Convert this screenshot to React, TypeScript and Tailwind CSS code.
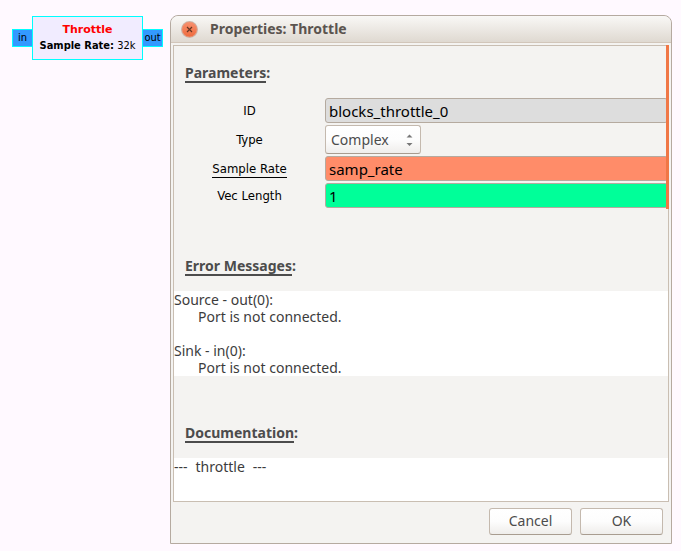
import type { ReactNode } from 'react';

function SectionHeading({ children }: { children: ReactNode }) {
  return (
    <h2 className="flex pl-[11px] text-[14px] leading-[15px] font-bold text-[#4c4c4c]">
      <span className="border-b-2 border-[#4c4c4c] pb-px">{children}</span>:
    </h2>
  );
}

function Port({ children }: { children: ReactNode }) {
  return (
    <div className="flex h-[18px] w-[21px] items-center justify-center border border-[#00ffff] bg-[#3399ff] text-[11px]">
      {children}
    </div>
  );
}

function FlowBlock() {
  return (
    <div className="mt-4 flex shrink-0 items-center self-start font-['DejaVu_Sans_Condensed','DejaVu_Sans',sans-serif] text-black">
      <Port>in</Port>
      <div className="-mx-px flex h-11 w-[111px] flex-col items-center justify-center border border-[#00ffff] bg-[#f1ecff] text-[11px] leading-4 whitespace-nowrap">
        <div className="font-['DejaVu_Sans',sans-serif] font-bold text-[#ff0000]">Throttle</div>
        <div>
          <b>Sample Rate:</b> 32k
        </div>
      </div>
      <Port>out</Port>
    </div>
  );
}

const entry =
  'h-[25px] w-full rounded-[3px] border border-[#b5aa9f] px-[3px] text-[15px] text-black outline-none';
const label = 'text-center text-[13px] leading-4 text-black';
const button =
  "h-[27px] w-[83px] rounded-[3px] border border-[#c4b9ae] border-b-[#a89c90] bg-linear-to-b from-white via-[#fdfdfd] to-[#efedeb] pb-[3px] text-[14px] text-[#4c4c4c]";

function Parameters() {
  return (
    <div className="mt-[15px] grid grid-cols-[151px_1fr] items-center gap-y-[2px] font-['DejaVu_Sans_Condensed','DejaVu_Sans',sans-serif]">
      <label htmlFor="block-id" className={label}>ID</label>
      <input id="block-id" defaultValue="blocks_throttle_0" className={`${entry} bg-[#dddddd] font-['Noto_Sans',sans-serif]`} />
      <label htmlFor="type" className={label}>Type</label>
      <div className="relative w-24">
        <select
          id="type"
          className="block h-[29px] w-full appearance-none rounded-[3px] border border-[#c4b9ae] border-b-[#a89c90] bg-linear-to-b from-white via-[#fdfdfd] to-[#efedeb] pl-[5px] font-['Noto_Sans',sans-serif] text-[14px] text-[#4c4c4c]"
        >
          <option>Complex</option>
        </select>
        <svg className="pointer-events-none absolute top-2 right-2 h-[14px] w-[7px]" viewBox="0 0 7 14" fill="#777">
          <path d="M3.5 1.500 6.500 4.500H.5ZM3.500 13 .5 10H6.500Z" />
        </svg>
      </div>
      <label htmlFor="rate" className={label}>
        <span className="border-b border-black pb-px">Sample Rate</span>
      </label>
      <input id="rate" defaultValue="samp_rate" className={`${entry} bg-[#ff8c69] font-['Noto_Sans',sans-serif]`} />
      <label htmlFor="length" className={label}>Vec Length</label>
      <input id="length" defaultValue="1" className={`${entry} bg-[#00ff99] font-['Noto_Sans',sans-serif]`} />
    </div>
  );
}

function PropertiesDialog() {
  return (
    <section className="mt-[15px] mr-[9px] ml-[7px] flex min-w-0 flex-1 flex-col rounded-t-lg border border-[#b5aaa0] bg-[#f4f3f1] font-['Noto_Sans',sans-serif]">
      <header className="flex h-[27px] items-center gap-3 rounded-t-lg border-b border-[#d2c6ba] bg-linear-to-b from-[#f9f8f6] to-[#dfd9d1] pl-[10px]">
        <button aria-label="Close" className="mt-px size-[17px]">
          <svg viewBox="0 0 17 17">
            <defs>
              <linearGradient id="close" x2="0" y2="1">
                <stop stopColor="#f8906e" />
                <stop offset="1" stopColor="#ee6a3c" />
              </linearGradient>
            </defs>
            <circle cx="8.500" cy="8.500" r="8.500" fill="#c9bfb5" />
            <circle cx="8.500" cy="8.500" r="7.500" fill="url(#close)" stroke="#e79478" strokeWidth=".8" />
            <path d="M6 6l5 5M11 6l-5 5" stroke="#653522" strokeWidth="1.200" />
          </svg>
        </button>
        <h1 className="pb-px text-[14px] leading-5 font-bold text-[#5b544f]">Properties: Throttle</h1>
      </header>
      <div className="relative mx-[2px] mt-[2px] border border-[#c9beb2] pt-[19px]">
        <SectionHeading>Parameters</SectionHeading>
        <Parameters />
        <div className="absolute -top-px -right-px h-[164px] w-[3px] bg-[#f07746]" />
        <div className="mt-[50px]">
          <SectionHeading>Error Messages</SectionHeading>
        </div>
        <div className="mt-[15px] bg-white text-[14px] leading-[17px] text-[#3c3c3c]">
          <p>Source - out(0):</p>
          <p className="pl-6">Port is not connected.</p>
          <p className="mt-[17px]">Sink - in(0):</p>
          <p className="pl-6">Port is not connected.</p>
        </div>
        <div className="mt-[49px]">
          <SectionHeading>Documentation</SectionHeading>
        </div>
        <div className="mt-[15px] flex gap-2 bg-white pb-[26px] text-[14px] leading-[17px] text-[#3c3c3c]">
          <span>---</span>
          <span>throttle</span>
          <span>---</span>
        </div>
      </div>
      <footer className="flex justify-end gap-2 px-2 pt-[6px] pb-2">
        <button className={button}>Cancel</button>
        <button className={button}>OK</button>
      </footer>
    </section>
  );
}

export default function App() {
  return (
    <main className="flex min-h-screen items-start bg-[#fff9ff] pl-3">
      <FlowBlock />
      <PropertiesDialog />
    </main>
  );
}
